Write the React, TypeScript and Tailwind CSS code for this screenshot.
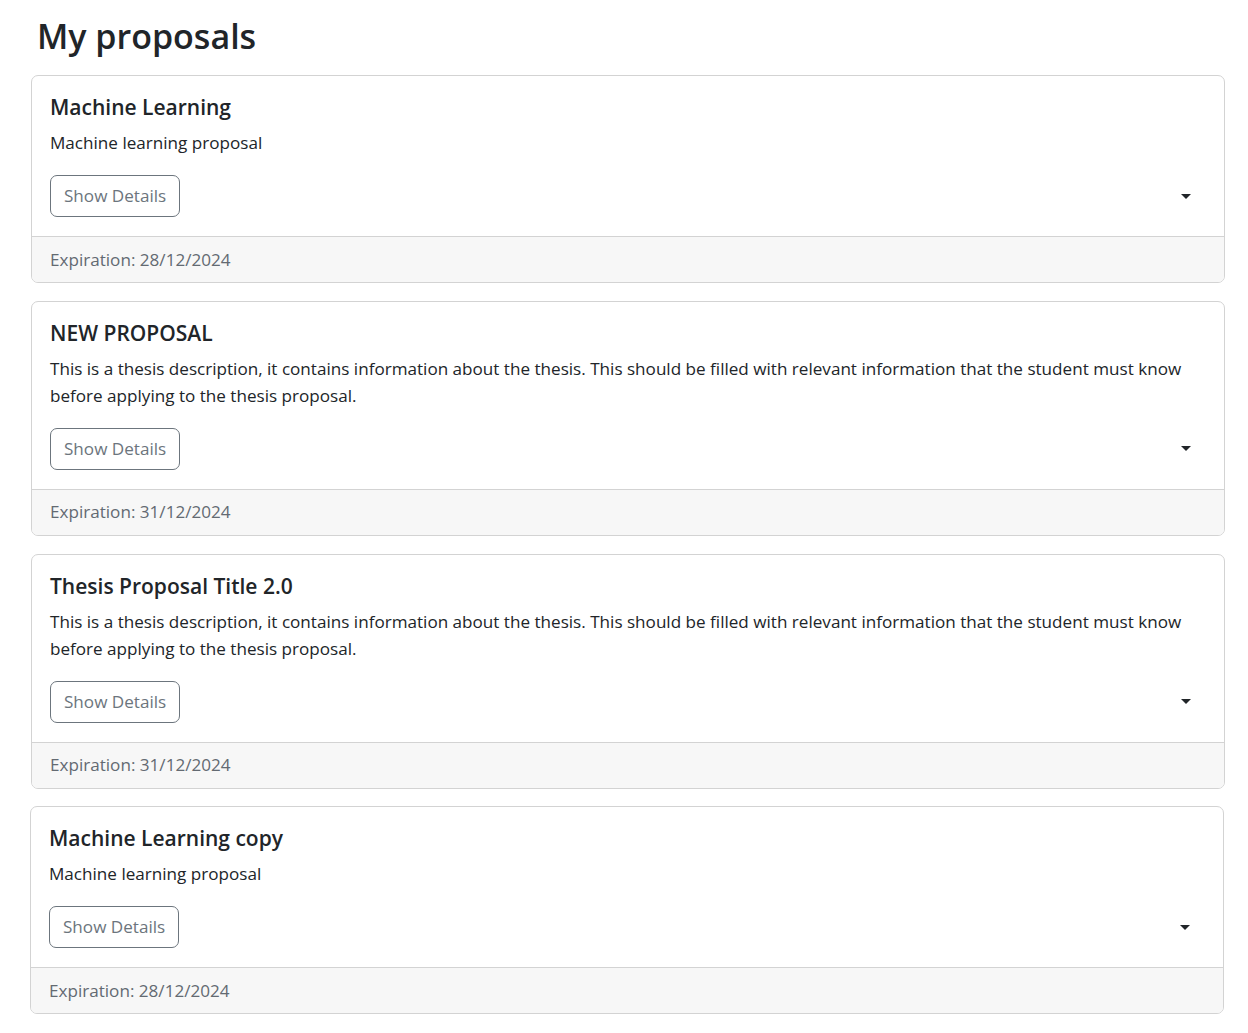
const proposals = [
  {
    title: 'Machine Learning',
    description: 'Machine learning proposal',
    expiration: '28/12/2024',
  },
  {
    title: 'NEW PROPOSAL',
    description:
      'This is a thesis description, it contains information about the thesis. This should be filled with relevant information that the student must know before applying to the thesis proposal.',
    expiration: '31/12/2024',
  },
  {
    title: 'Thesis Proposal Title 2.0',
    description:
      'This is a thesis description, it contains information about the thesis. This should be filled with relevant information that the student must know before applying to the thesis proposal.',
    expiration: '31/12/2024',
  },
  {
    title: 'Machine Learning copy',
    description: 'Machine learning proposal',
    expiration: '28/12/2024',
  },
];

function ProposalCard({
  title,
  description,
  expiration,
  shifted,
}: {
  title: string;
  description: string;
  expiration: string;
  shifted?: boolean;
}) {
  return (
    <div
      className={`rounded-[7px] border border-[#d3d3d3] bg-white overflow-hidden ${
        shifted ? '-ml-px mr-px' : ''
      }`}
    >
      {/* Body */}
      <div className="px-[18px] pt-[18px] pb-[19px]">
        <h5 className="text-[21px] leading-[27px] font-semibold text-[#212529] mb-[8px]">{title}</h5>
        <p className="text-[17.1px] leading-[27px] text-[#212529] mb-[19px]">{description}</p>
        <div className="flex items-center justify-between">
          <button className="h-[42px] px-[13px] rounded-[7px] border border-[#6c757d] text-[#6c757d] text-[17.1px] leading-[26px]">
            Show Details
          </button>
          <button className="h-[42px] px-[15px] flex items-center">
            <span className="block w-0 h-0 border-x-[5px] border-x-transparent border-t-[5px] border-t-[#212529]" />
          </button>
        </div>
      </div>
      {/* Footer */}
      <div className="border-t border-[#d3d3d3] bg-[#f7f7f7] px-[18px] py-[9.5px] text-[17.1px] leading-[26px] text-[#636a72]">
        Expiration: {expiration}
      </div>
    </div>
  );
}

export default function App() {
  return (
    <div className="min-h-screen bg-white pl-[31px] pr-[23px] pt-[14px] pb-[20px] font-['Open_Sans',sans-serif]">
      <h2 className="pl-[6px] text-[34px] leading-[44px] font-semibold text-[#212529] mb-[17px]">My proposals</h2>
      <div className="flex flex-col gap-[17.8px]">
        {proposals.map((p, i) => (
          <ProposalCard key={i} {...p} shifted={i === proposals.length - 1} />
        ))}
      </div>
    </div>
  );
}
